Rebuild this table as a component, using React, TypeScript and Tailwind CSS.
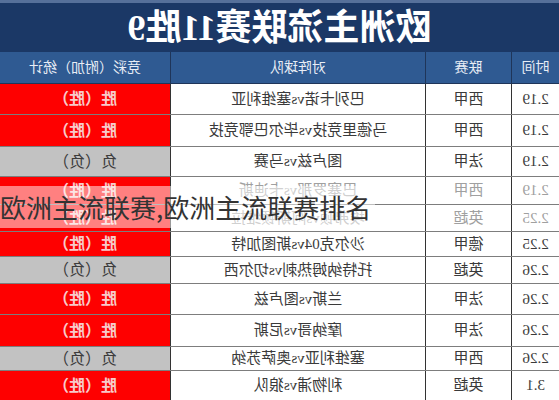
import React from "react";

type Row = {
  time: string;
  league: string;
  match: string;
  win: boolean;
  h: string;
  faded?: boolean;
};

const rows: Row[] = [
  { time: "2.19", league: "西甲", match: "巴列卡诺vs塞维利亚", win: true, h: "h-[31px]" },
  { time: "2.19", league: "西甲", match: "马德里竞技vs毕尔巴鄂竞技", win: true, h: "h-[32px]" },
  { time: "2.19", league: "法甲", match: "图卢兹vs马赛", win: false, h: "h-[30px]" },
  { time: "2.19", league: "西甲", match: "巴塞罗那vs卡迪斯", win: true, h: "h-[28px]", faded: true },
  { time: "2.25", league: "英超", match: "埃弗顿vs阿斯顿维拉", win: true, h: "h-[27px]", faded: true },
  { time: "2.25", league: "德甲", match: "沙尔克04vs斯图加特", win: true, h: "h-[25px]" },
  { time: "2.26", league: "英超", match: "托特纳姆热刺vs切尔西", win: false, h: "h-[27px]" },
  { time: "2.26", league: "法甲", match: "兰斯vs图卢兹", win: true, h: "h-[31px]" },
  { time: "2.26", league: "法甲", match: "摩纳哥vs尼斯", win: true, h: "h-[32px]" },
  { time: "2.26", league: "西甲", match: "塞维利亚vs奥萨苏纳", win: false, h: "h-[24px]" },
  { time: "3.1", league: "英超", match: "利物浦vs狼队", win: true, h: "h-[30px]" },
];

const font = { fontFamily: '"Liberation Serif", "Noto Sans CJK SC", serif' };

export default function App() {
  return (
    <div className="relative w-[559px] h-[400px] overflow-hidden bg-white" style={font}>
      {/* the whole sheet is mirrored in the picture */}
      <div className="-scale-x-100 flex flex-col w-full h-full">
        <div className="h-[52px] shrink-0 bg-[#1b3866] border-t-[3px] border-[#56709a] flex items-center justify-center">
          <span className="text-white text-[36px] font-bold leading-none">
            欧洲主流联赛11胜9
          </span>
        </div>
        <div className="h-[32px] shrink-0 flex bg-[#2f5a92] text-[#e8edf5] text-[14px] border-b border-[#1f3559]">
          <div className="w-[48px] flex items-center justify-center border-r border-[#1f3559]">时间</div>
          <div className="w-[86px] flex items-center justify-center border-r border-[#1f3559]">联赛</div>
          <div className="w-[255px] flex items-center justify-center border-r border-[#1f3559]">对阵球队</div>
          <div className="flex-1 flex items-center justify-center">竞彩（附加）统计</div>
        </div>
        {rows.map((r, i) => (
          <div
            key={i}
            className={`${r.h} shrink-0 flex text-[15px] border-b border-[#7d7d7d] ${
              r.faded ? "text-[#a0a0a0]" : "text-[#3a3a3a]"
            }`}
          >
            <div className="w-[48px] flex items-center justify-center border-r border-[#333]">{r.time}</div>
            <div className="w-[86px] flex items-center justify-center border-r border-[#333]">{r.league}</div>
            <div className="w-[255px] flex items-center justify-center border-r border-[#333]">{r.match}</div>
            {r.win ? (
              <div className="flex-1 flex items-center justify-center bg-[#fe0000] text-[#f7caca] text-[16px] font-bold">
                胜（胜）
              </div>
            ) : (
              <div className="flex-1 flex items-center justify-center bg-[#c2c2c2] text-[#3c3c3c] text-[16px]">
                负（负）
              </div>
            )}
          </div>
        ))}
      </div>

      <div
        className="absolute left-0 top-[186px] h-[42px] pr-1 flex items-center bg-white/50 text-[#333] text-[26px] leading-none"
        style={{ fontFamily: '"Noto Sans CJK SC", sans-serif' }}
      >
        欧洲主流联赛,欧洲主流联赛排名
      </div>
    </div>
  );
}
